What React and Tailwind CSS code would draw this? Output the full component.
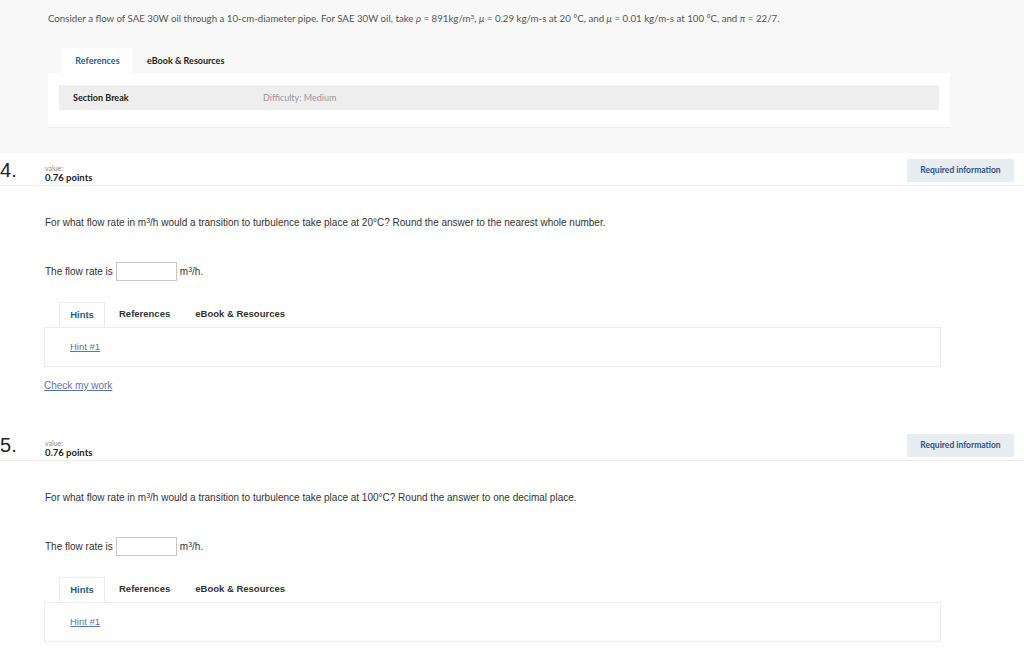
import React from 'react';

const sans = { fontFamily: '"Liberation Sans", Arial, sans-serif' };
const soft = { fontFamily: 'Lato, "Noto Sans", sans-serif' };

const QuestionHeader = ({ num }) => (
  <div className="flex items-start justify-between border-b border-[#ececec] h-[33px]">
    <div className="flex items-start">
      <div className="w-[45px] text-[20px] leading-none text-[#222] pt-[7px]" style={sans}>{num}.</div>
      <div className="pt-[11px]" style={soft}>
        <div className="text-[7px] leading-[8px] text-[#888]">value:</div>
        <div className="text-[9.5px] leading-[12px] font-bold text-[#222]">0.76 points</div>
      </div>
    </div>
    <button
      className="mt-[6px] mr-[10px] w-[107px] h-[23px] bg-[#e8edf2] text-[#2b5385] text-[8.5px] font-bold rounded-[1px]"
      style={soft}
    >
      Required information
    </button>
  </div>
);

const HintTabs = () => (
  <div className="pl-[44px]" style={sans}>
    <div className="flex items-end pl-[15px] h-[25px]">
      <div className="h-[25px] w-[46px] bg-white border border-b-0 border-[#ececec] flex items-center justify-center text-[9.5px] font-bold text-[#2c5a8c]">
        Hints
      </div>
      <div className="h-[25px] flex items-center pl-[14px] text-[9.5px] font-bold text-[#333]">References</div>
      <div className="h-[25px] flex items-center pl-[25px] text-[9.5px] font-bold text-[#333]">eBook &amp; Resources</div>
    </div>
    <div className="w-[897px] h-[40px] border border-[#ececec] bg-[#fefefe] flex items-center pl-[25px]">
      <a className="text-[9.5px] text-[#5a78a6] underline">Hint #1</a>
    </div>
  </div>
);

const Question = ({ num, temp, tail, check }) => (
  <div>
    <QuestionHeader num={num} />
    <div className="pl-[45px] text-[10px] text-[#333]" style={sans}>
      <p className="mt-[31px] leading-[12px]">
        For what flow rate in m<sup className="text-[7px]">3</sup>/h would a transition to turbulence take place at {temp}? {tail}
      </p>
      <div className="mt-[33px] flex items-center h-[19px]">
        <span>The flow rate is</span>
        <span className="ml-[3px] w-[61px] h-[19px] border border-[#c8c8c8] bg-white"></span>
        <span className="ml-[3px]">m<sup className="text-[7px]">3</sup>/h.</span>
      </div>
    </div>
    <div className="mt-[21px]">
      <HintTabs />
    </div>
    {check && (
      <div className="pl-[44px] mt-[11px] text-[10px]" style={sans}>
        <a className="text-[#5a78a6] underline">Check my work</a>
      </div>
    )}
  </div>
);

export default function App() {
  return (
    <div className="w-[1024px] h-[648px] bg-white overflow-hidden">
      <div className="bg-[#f8f8f8] h-[153px] pl-[48px] pt-[12px]" style={soft}>
        <p className="text-[9.7px] leading-[12px] text-[#555]">
          Consider a flow of SAE 30W oil through a 10-cm-diameter pipe. For SAE 30W oil, take <i>ρ</i> = 891kg/m<sup className="text-[6.5px]">3</sup>, <i>μ</i> = 0.29 kg/m-s at 20 °C, and <i>μ</i> = 0.01 kg/m-s at 100 °C, and <i>π</i> = 22/7.
        </p>
        <div className="mt-[24px] flex items-end pl-[14px] h-[25px]">
          <div className="h-[25px] w-[71px] bg-white flex items-center justify-center text-[9px] font-bold text-[#2c5a8c]">
            References
          </div>
          <div className="h-[25px] flex items-center pl-[14px] text-[9px] font-bold text-[#222]">eBook &amp; Resources</div>
        </div>
        <div className="w-[902px] h-[55px] bg-white border-b border-[#ececec] px-[11px] pt-[12px]">
          <div className="h-[25px] bg-[#eeeeee] flex items-center text-[9px]">
            <span className="pl-[14px] w-[204px] font-bold text-[#222]">Section Break</span>
            <span className="text-[#999]">Difficulty: Medium</span>
          </div>
        </div>
      </div>
      <div>
        <Question num={4} temp="20°C" tail="Round the answer to the nearest whole number." check />
      </div>
      <div className="mt-[35px]">
        <Question num={5} temp="100°C" tail="Round the answer to one decimal place." />
      </div>
    </div>
  );
}
